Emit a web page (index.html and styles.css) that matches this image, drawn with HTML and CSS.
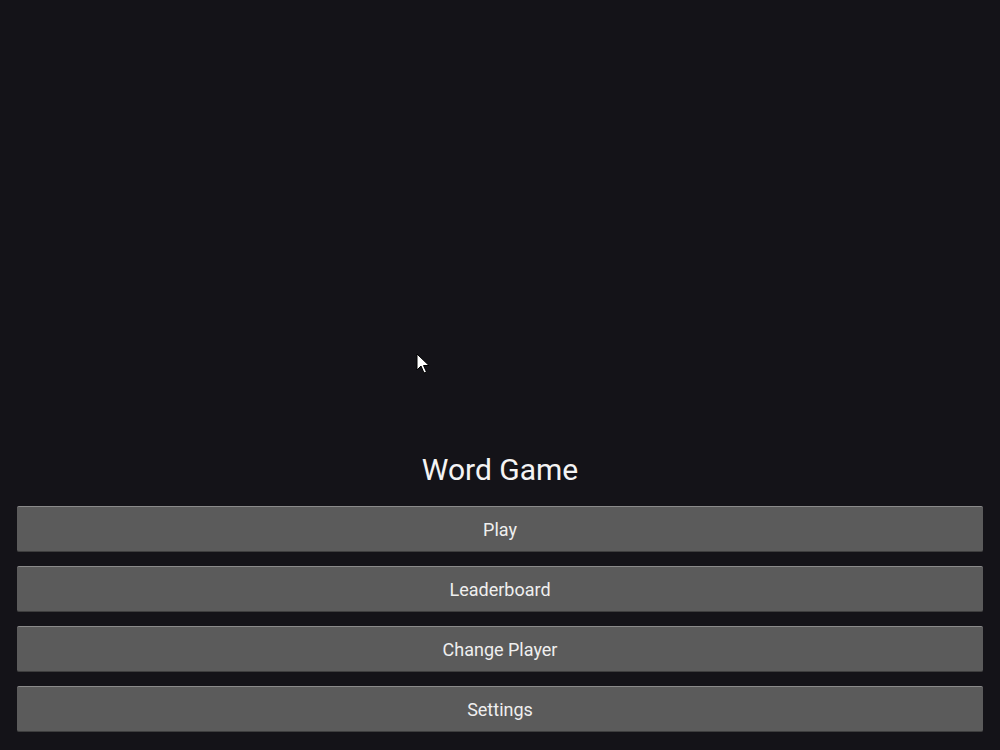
FILE: index.html
```html
<!DOCTYPE html>
<html>
<head>
<meta charset="utf-8">
<link rel="stylesheet" href="styles.css">
</head>
<body>
<main class="menu">
  <h1 class="title">Word Game</h1>
  <button class="btn">Play</button>
  <button class="btn">Leaderboard</button>
  <button class="btn">Change Player</button>
  <button class="btn">Settings</button>
</main>
<svg class="cursor" width="14" height="22" viewBox="0 0 14 22"><path d="M1 1 L1 17 L5 13 L8 20 L10.5 19 L7.5 12.5 L13 12.5 Z" fill="#fff" stroke="#000" stroke-width="1"/></svg>
</body>
</html>
```
FILE: styles.css
```css
html, body {
  margin: 0;
  height: 100%;
}
body {
  background: #141318;
  font-family: Roboto, "Liberation Sans", sans-serif;
  overflow: hidden;
  position: relative;
}
.menu {
  height: 100%;
  box-sizing: border-box;
  display: flex;
  flex-direction: column;
  justify-content: flex-end;
  padding: 0 17px 18px;
  gap: 14px;
}
.title {
  margin: 0 0 5px;
  text-align: center;
  font-weight: 400;
  font-size: 30px;
  line-height: 34px;
  color: #f4f4f4;
}
.btn {
  height: 46px;
  background: #5b5b5b;
  border: none;
  border-top: 1px solid #8a8a8a;
  border-bottom: 1px solid #3e3e3e;
  border-radius: 2px;
  color: #efefef;
  font-family: Roboto, "Liberation Sans", sans-serif;
  font-size: 18px;
  padding: 0;
}
.cursor {
  position: absolute;
  left: 416px;
  top: 353px;
}
```
